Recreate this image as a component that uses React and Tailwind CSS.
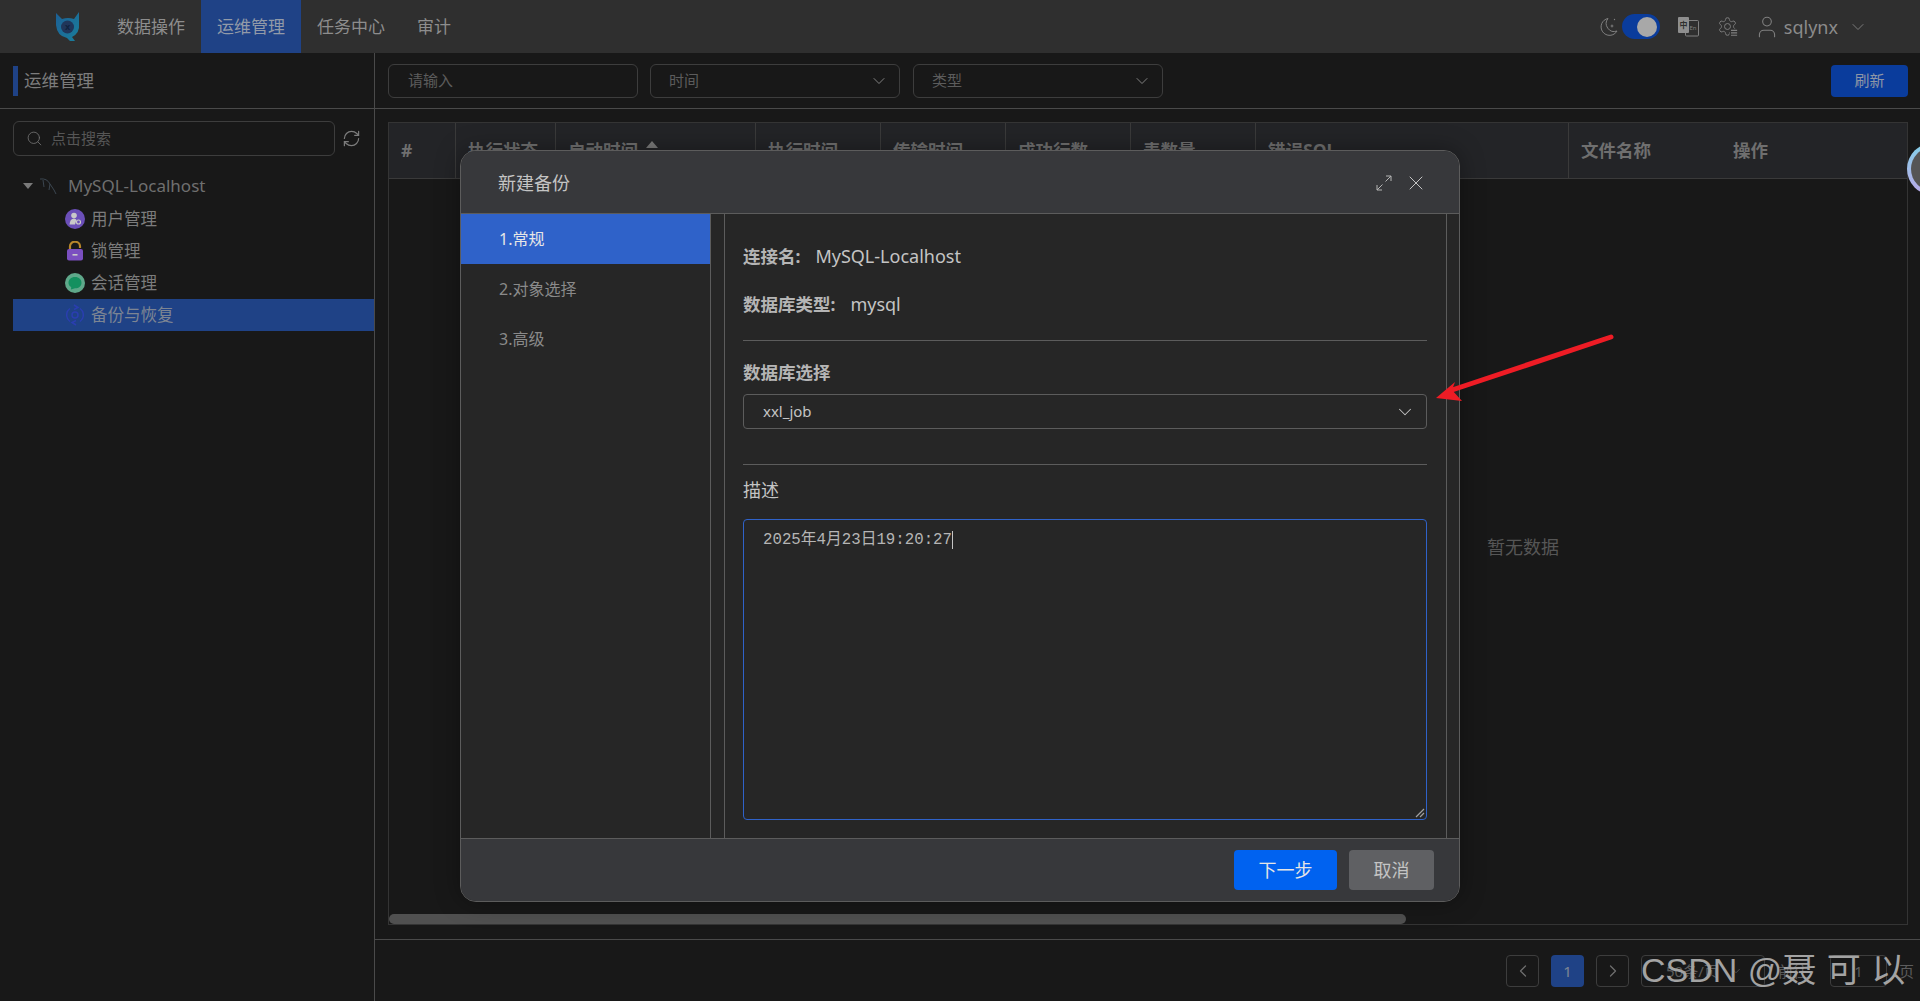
import { ChevronDown, ChevronLeft, ChevronRight, Search, RefreshCw, X, User } from 'lucide-react';

const FONT = "font-['Noto_Sans','Noto_Sans_CJK_SC',sans-serif]";

const navItems = [
  { label: '数据操作' },
  { label: '运维管理', active: true },
  { label: '任务中心' },
  { label: '审计' },
];

const columns = [
  { label: '#', width: 'w-[67px]' },
  { label: '执行状态', width: 'w-[100px]' },
  { label: '启动时间', width: 'w-[200px]', sorted: true },
  { label: '执行时间', width: 'w-[125px]' },
  { label: '传输时间', width: 'w-[125px]' },
  { label: '成功行数', width: 'w-[125px]' },
  { label: '表数量', width: 'w-[125px]' },
  { label: '错误SQL', width: 'w-[313px]' },
  { label: '文件名称', width: 'w-[152px]', last: true },
  { label: '操作', width: 'flex-1', last: true },
];

// Logo
const Logo = () => (
  <svg width="26" height="30" viewBox="0 0 26 30">
    <defs>
      <linearGradient id="logoFill" x1="0" y1="0" x2="1" y2="1">
        <stop offset="0" stopColor="#1c5f95" />
        <stop offset="1" stopColor="#1a7f9c" />
      </linearGradient>
    </defs>
    <path d="M1 1 L7 7 Q13 5 19 7 L24 0 L24 12 Q25 21 17 25 L20 29 L15 29 L12 26 Q2 24 1 13 Z" fill="url(#logoFill)" />
    <circle cx="12.5" cy="15" r="6.5" fill="#20365a" />
    <text x="12.5" y="18" textAnchor="middle" fontSize="9" fontWeight="700" fill="#10233f">x</text>
  </svg>
);

const Dolphin = () => (
  <svg width="18" height="17" viewBox="0 0 18 17" fill="none" stroke="#3b4650" strokeWidth="1">
    <path d="M1 1 Q8 0 11 6 L15 12 L17 16 M11 6 L10 12 M4 2 L5 9" />
  </svg>
);

const MoonIcon = () => (
  <svg width="20" height="20" viewBox="0 0 20 20" fill="none" stroke="#808080" strokeWidth="1">
    <path d="M9 1.5 A8.5 8.5 0 1 0 18 14 A8 8 0 0 1 9 1.5 Z" />
    <path d="M13 7 L13.6 8.4 L15 9 L13.6 9.6 L13 11 L12.4 9.6 L11 9 L12.4 8.4 Z" fill="#808080" stroke="none" />
    <circle cx="15.5" cy="2.5" r="0.7" fill="#808080" stroke="none" />
  </svg>
);

const GearIcon = () => (
  <svg width="21" height="21" viewBox="0 0 24 24" fill="none" stroke="#808080" strokeWidth="1.1">
    <path d="M12.22 2h-.44a2 2 0 0 0-2 2v.18a2 2 0 0 1-1 1.73l-.43.25a2 2 0 0 1-2 0l-.15-.08a2 2 0 0 0-2.73.73l-.22.38a2 2 0 0 0 .73 2.73l.15.1a2 2 0 0 1 1 1.72v.51a2 2 0 0 1-1 1.74l-.15.09a2 2 0 0 0-.73 2.73l.22.38a2 2 0 0 0 2.73.73l.15-.08a2 2 0 0 1 2 0l.43.25a2 2 0 0 1 1 1.73V20a2 2 0 0 0 2 2h.44a2 2 0 0 0 2-2v-.18a2 2 0 0 1 1-1.73l.43-.25a2 2 0 0 1 2 0l.15.08a2 2 0 0 0 2.73-.73l.22-.39a2 2 0 0 0-.73-2.73l-.15-.08a2 2 0 0 1-1-1.74v-.5a2 2 0 0 1 1-1.74l.15-.09a2 2 0 0 0 .73-2.73l-.22-.38a2 2 0 0 0-2.73-.73l-.15.08a2 2 0 0 1-2 0l-.43-.25a2 2 0 0 1-1-1.73V4a2 2 0 0 0-2-2z" />
    <circle cx="12" cy="12" r="3.4" />
    <rect x="14.5" y="14.5" width="9.5" height="9.5" fill="#2f2f2f" stroke="none" />
    <path d="M16 16.5 H23 M16 19.2 H23 M16 22 H23" strokeWidth="1.4" />
  </svg>
);

const UserGearBadge = () => (
  <svg width="20" height="20" viewBox="0 0 20 20">
    <circle cx="10" cy="10" r="10" fill="#6b4fb8" />
    <circle cx="9" cy="6.5" r="2.8" fill="#c9c9c9" />
    <path d="M4.5 15.5 Q5 9.5 9 9.5 Q11 9.5 11.5 11 L10 15.5 Z" fill="#c9c9c9" />
    <circle cx="13.5" cy="13" r="2" fill="none" stroke="#c9c9c9" strokeWidth="1.2" />
  </svg>
);

const LockBadge = () => (
  <svg width="18" height="20" viewBox="0 0 18 20">
    <path d="M4 9 V5.5 A5 4.5 0 0 1 14 5 V7" fill="none" stroke="#b8862a" strokeWidth="2.2" />
    <rect x="1" y="8" width="16" height="11.5" rx="2" fill="#7b4fc0" />
    <rect x="6.5" y="13" width="5" height="1.6" fill="#c9c9c9" />
  </svg>
);

const ChatBadge = () => (
  <svg width="20" height="20" viewBox="0 0 20 20">
    <circle cx="10" cy="10" r="10" fill="#5fa88a" />
    <path d="M10 4 C14 4 16.5 6.5 16.5 9.7 C16.5 13 14 15.3 10 15.3 L6 16.5 L6.2 14 C4.3 13 3.5 11.4 3.5 9.7 C3.5 6.5 6 4 10 4 Z" fill="#14905f" />
  </svg>
);

const BackupBadge = () => (
  <svg width="18" height="22" viewBox="0 0 18 22" fill="none" stroke="#2a3eb0" strokeWidth="1.5">
    <path d="M4 4.5 A8 8 0 0 0 4 17.5 M14 4.5 A8 8 0 0 1 14 17.5" />
    <path d="M8 1 L12 3.5 L8 5.5 M10 16.5 L6 18.5 L10 21" />
    <circle cx="9" cy="11" r="3" />
  </svg>
);

const TreeItem = ({ icon, label, active }) => (
  <div className={`h-[32px] flex items-center ${active ? 'bg-[#1f4286] text-[#7d8593]' : 'text-[#7c7c7c]'}`}>
    <span className="w-[52px] shrink-0" />
    <span className="w-[20px] h-[20px] shrink-0 flex items-center justify-center">{icon}</span>
    <span className="ml-[6px] text-[16.5px] leading-none">{label}</span>
  </div>
);

const SelectBox = ({ label, className = '' }) => (
  <div className={`w-[250px] h-[34px] rounded-[6px] border border-[#3d3d3d] flex items-center justify-between pl-[18px] pr-[10px] text-[15px] text-[#5c5c5c] ${className}`}>
    <span>{label}</span>
    <ChevronDown size={20} strokeWidth={1.1} className="text-[#8a8a8a]" />
  </div>
);

const PageBtn = ({ children, active }) => (
  <div className={`w-[33px] h-[32px] rounded-[4px] flex items-center justify-center ${active ? 'bg-[#1f4286] text-[#7d8593]' : 'border border-[#3d3d3d] text-[#6e6e6e]'}`}>
    {children}
  </div>
);

export default function App() {
  return (
    <div className={`${FONT} relative w-[1920px] h-[1001px] overflow-hidden bg-[#181818]`}>
      {/* Top bar */}
      <header className="h-[53px] bg-[#2f2f2f] flex items-center">
        <div className="w-[101px] flex items-center pl-[55px] shrink-0 h-full">
          <Logo />
        </div>
        <nav className="flex h-full">
          {navItems.map((item) => (
            <div
              key={item.label}
              className={`h-full px-[16px] flex items-center text-[17px] ${item.active ? 'bg-[#1f4286] text-[#929aa8]' : 'text-[#8d8d8d]'}`}
            >
              {item.label}
            </div>
          ))}
        </nav>
        <div className="ml-auto flex items-center pr-[52px] text-[#808080]">
          <MoonIcon />
          <div className="ml-[3px] w-[38px] h-[25px] rounded-full bg-[#0a3c9c] flex items-center justify-end pr-[3px]">
            <div className="w-[20px] h-[20px] rounded-full bg-[#a8a8a8]" />
          </div>
          <svg className="ml-[18px]" width="21" height="20" viewBox="0 0 21 20">
            <rect x="7.5" y="3.5" width="13" height="15.5" rx="1" fill="none" stroke="#808080" />
            <rect x="0" y="0" width="11" height="16" rx="1" fill="#8f8f8f" />
            <text x="5.5" y="11" textAnchor="middle" fontSize="8" fontWeight="700" fill="#2f2f2f">中</text>
            <text x="15" y="13" textAnchor="middle" fontSize="6" fill="#808080">En</text>
          </svg>
          <span className="ml-[18px]"><GearIcon /></span>
          <User className="ml-[16px]" size={26} strokeWidth={1} />
          <span className="ml-[4px] text-[18px] leading-none text-[#8b8b8b]">sqlynx</span>
          <ChevronDown className="ml-[10px]" size={20} strokeWidth={1.1} />
        </div>
      </header>

      <div className="flex h-[948px]">
        {/* Sidebar */}
        <aside className="w-[375px] shrink-0 border-r border-[#4a4a4a] flex flex-col">
          <div className="h-[56px] border-b border-[#4a4a4a] flex items-center pl-[13px] shrink-0">
            <div className="w-[5px] h-[30px] bg-[#1f4286]" />
            <span className="ml-[6px] text-[17.5px] text-[#7c7c7c]">运维管理</span>
          </div>
          <div className="pl-[13px] pt-[12px] flex items-center">
            <div className="w-[322px] h-[35px] rounded-[6px] border border-[#3d3d3d] flex items-center pl-[12px]">
              <Search size={17} strokeWidth={1.25} className="text-[#6e6e6e]" />
              <span className="ml-[8px] text-[15px] text-[#565656]">点击搜索</span>
            </div>
            <RefreshCw size={19} strokeWidth={1.5} className="ml-[7px] text-[#7d7d7d]" />
          </div>
          <div className="mt-[13px] flex items-center h-[34px] text-[#6f6f6f]">
            <span className="ml-[23px] w-0 h-0 border-x-[5px] border-x-transparent border-t-[6px] border-t-[#7a7a7a]" />
            <span className="ml-[6px]"><Dolphin /></span>
            <span className="ml-[11px] text-[17px]">MySQL-Localhost</span>
          </div>
          <div className="pl-[13px]">
            <TreeItem label="用户管理" icon={<UserGearBadge />} />
            <TreeItem label="锁管理" icon={<LockBadge />} />
            <TreeItem label="会话管理" icon={<ChatBadge />} />
            <TreeItem active label="备份与恢复" icon={<BackupBadge />} />
          </div>
        </aside>

        {/* Main */}
        <main className="flex-1 flex flex-col min-w-0">
          <div className="h-[56px] shrink-0 border-b border-[#4a4a4a] flex items-center pl-[13px] pr-[12px] gap-[12px]">
            <div className="w-[250px] h-[34px] rounded-[6px] border border-[#3d3d3d] flex items-center pl-[19px] text-[15px] text-[#5c5c5c]">
              请输入
            </div>
            <SelectBox label="时间" />
            <SelectBox label="类型" className="ml-[1px]" />
            <button className="ml-auto w-[77px] h-[32px] rounded-[4px] bg-[#0a3c9c] text-[15px] text-[#8e96a6]">刷新</button>
          </div>

          <div className="h-[830px] shrink-0 pt-[13px] pl-[13px] pr-[12px] pb-[14px] flex">
            <div className="flex-1 border border-[#343434] flex flex-col">
              <div className="h-[56px] shrink-0 bg-[#232427] border-b border-[#3a3a3a] flex">
                {columns.map((col) => (
                  <div
                    key={col.label}
                    className={`${col.width} h-full flex items-center pb-[1px] pl-[12px] text-[17.5px] font-bold text-[#6f6f6f] ${col.last ? '' : 'border-r border-[#3a3a3a]'}`}
                  >
                    {col.label}
                    {col.sorted && (
                      <span className="ml-[8px] mb-[12px] w-0 h-0 border-x-[6px] border-x-transparent border-b-[7px] border-b-[#7a7a7a]" />
                    )}
                  </div>
                ))}
              </div>
              <div className="flex-1 flex items-center pl-[1098px] pt-[2px] text-[18px] text-[#565656]">暂无数据</div>
              <div className="w-[1017px] h-[10px] shrink-0 rounded-full bg-[#505050]" />
            </div>
          </div>

          {/* Pagination */}
          <div className="flex-1 border-t border-[#4a4a4a] flex items-start pt-[15px] pl-[1131px] gap-[12px] text-[#5c5c5c]">
            <PageBtn><ChevronLeft size={20} strokeWidth={1.5} /></PageBtn>
            <PageBtn active><span className="text-[15px]">1</span></PageBtn>
            <PageBtn><ChevronRight size={20} strokeWidth={1.5} /></PageBtn>
            <div className="w-[124px] h-[32px] rounded-[4px] border border-[#3d3d3d] flex items-center pl-[24px] text-[15px]">
              50条/页
              <ChevronDown size={14} strokeWidth={1.25} className="ml-[10px]" />
            </div>
            <span className="ml-[1px] w-[40px] text-[15px] leading-[32px]">前往</span>
            <div className="w-[57px] h-[32px] rounded-[4px] border border-[#3d3d3d] flex items-center justify-center text-[15px]">1</div>
            <span className="text-[15px] leading-[32px]">页</span>
          </div>
        </main>
      </div>

      {/* Floating helper ball */}
      <div className="absolute left-[1907px] top-[143px] w-[52px] h-[52px] rounded-full bg-gradient-to-b from-[#7fd0e8] to-[#b9a8e8] p-[4px]">
        <div className="w-full h-full rounded-full bg-[#555555]" />
      </div>

      {/* Modal */}
      <div className="absolute left-[460px] top-[150px] w-[1000px] h-[752px] rounded-[16px] border border-[#5c5c5c] bg-[#262626] overflow-hidden flex flex-col shadow-[0_0_24px_rgba(0,0,0,0.35)]">
        <div className="h-[63px] shrink-0 bg-[#37383b] border-b border-[#5c5c5c] flex items-center pl-[37px] pr-[31px] pt-[2px]">
          <span className="text-[18px] text-[#c4c4c4]">新建备份</span>
          <svg className="ml-auto" width="16" height="16" viewBox="0 0 16 16" fill="none" stroke="#b5b5b5" strokeWidth="1">
            <path d="M9.5 6.5 L15 1 M10 1 H15 V6 M6.5 9.5 L1 15 M1 10 V15 H6" />
          </svg>
          <X className="ml-[12px]" size={24} strokeWidth={1} color="#c4c4c4" />
        </div>

        <div className="flex-1 flex min-h-0">
          <div className="w-[250px] shrink-0 border-r border-[#5c5c5c]">
            <div className="h-[50px] bg-[#2f62c9] flex items-center pl-[38px] text-[16px] text-[#e6e6e6]">1.常规</div>
            <div className="h-[50px] flex items-center pl-[38px] text-[16px] text-[#8a8a8a]">2.对象选择</div>
            <div className="h-[50px] flex items-center pl-[38px] text-[16px] text-[#8a8a8a]">3.高级</div>
          </div>
          <div className="w-[14px] shrink-0 border-r border-[#5c5c5c]" />
          <div className="w-[722px] shrink-0 border-r border-[#5c5c5c] pl-[18px] pr-[19px] flex flex-col">
            <div className="mt-[28px] h-[28px] flex items-center text-[#c4c4c4]">
              <span className="text-[17.5px] font-bold text-[#b5b5b5]">连接名:</span>
              <span className="ml-[15px] text-[18px]">MySQL-Localhost</span>
            </div>
            <div className="mt-[20px] h-[28px] flex items-center text-[#c4c4c4]">
              <span className="text-[17.5px] font-bold text-[#b5b5b5]">数据库类型:</span>
              <span className="ml-[15px] text-[18px]">mysql</span>
            </div>
            <div className="mt-[22px] h-px bg-[#5c5c5c]" />
            <div className="mt-[18px] h-[26px] flex items-center text-[17.5px] font-bold text-[#b5b5b5]">数据库选择</div>
            <div className="mt-[9px] h-[35px] rounded-[4px] border border-[#5c5c5c] flex items-center justify-between pl-[19px] pr-[10px] text-[15px] text-[#c4c4c4]">
              <span>xxl_job</span>
              <ChevronDown size={22} strokeWidth={1.1} />
            </div>
            <div className="mt-[35px] h-px bg-[#5c5c5c]" />
            <div className="mt-[12px] h-[26px] flex items-center text-[18px] text-[#c4c4c4]">描述</div>
            <div className="relative mt-[16px] h-[301px] rounded-[4px] border border-[#2f62c9] pl-[19px] pt-[8px] font-['Liberation_Mono','Noto_Sans_CJK_SC',monospace] text-[15.75px] leading-[24px] text-[#b5b5b5]">
              2025年4月23日19:20:27<span className="inline-block align-middle w-px h-[18px] bg-[#c4c4c4]" />
              <svg className="absolute right-[1px] bottom-[1px]" width="10" height="10" viewBox="0 0 10 10" stroke="#a0a0a0" strokeWidth="1.2">
                <path d="M1 9 L9 1 M5 9 L9 5" />
              </svg>
            </div>
          </div>
        </div>

        <div className="h-[63px] shrink-0 bg-[#37383b] border-t border-[#5c5c5c] flex items-center justify-end pr-[25px] gap-[12px]">
          <button className="w-[103px] h-[40px] rounded-[4px] bg-[#0062f0] text-[18px] text-[#e6e6e6]">下一步</button>
          <button className="w-[85px] h-[40px] rounded-[4px] bg-[#5f6063] text-[18px] text-[#c4c4c4]">取消</button>
        </div>
      </div>

      {/* Annotation arrow */}
      <svg className="absolute left-[1430px] top-[330px] pointer-events-none" width="190" height="76" viewBox="0 0 190 76">
        <path d="M181 7 L22 60" stroke="#ee1c25" strokeWidth="5" strokeLinecap="round" />
        <path d="M6 68 L25 52 L22 60 L32 71 Z" fill="#ee1c25" />
      </svg>

      {/* Watermark */}
      <div className="absolute left-[1641px] top-[947px] font-['Liberation_Sans','Noto_Sans_CJK_SC',sans-serif] text-[34px] leading-[46px] text-[#a3a3a3] whitespace-pre [word-spacing:1px]">
        CSDN @聂 可 以
      </div>
    </div>
  );
}
